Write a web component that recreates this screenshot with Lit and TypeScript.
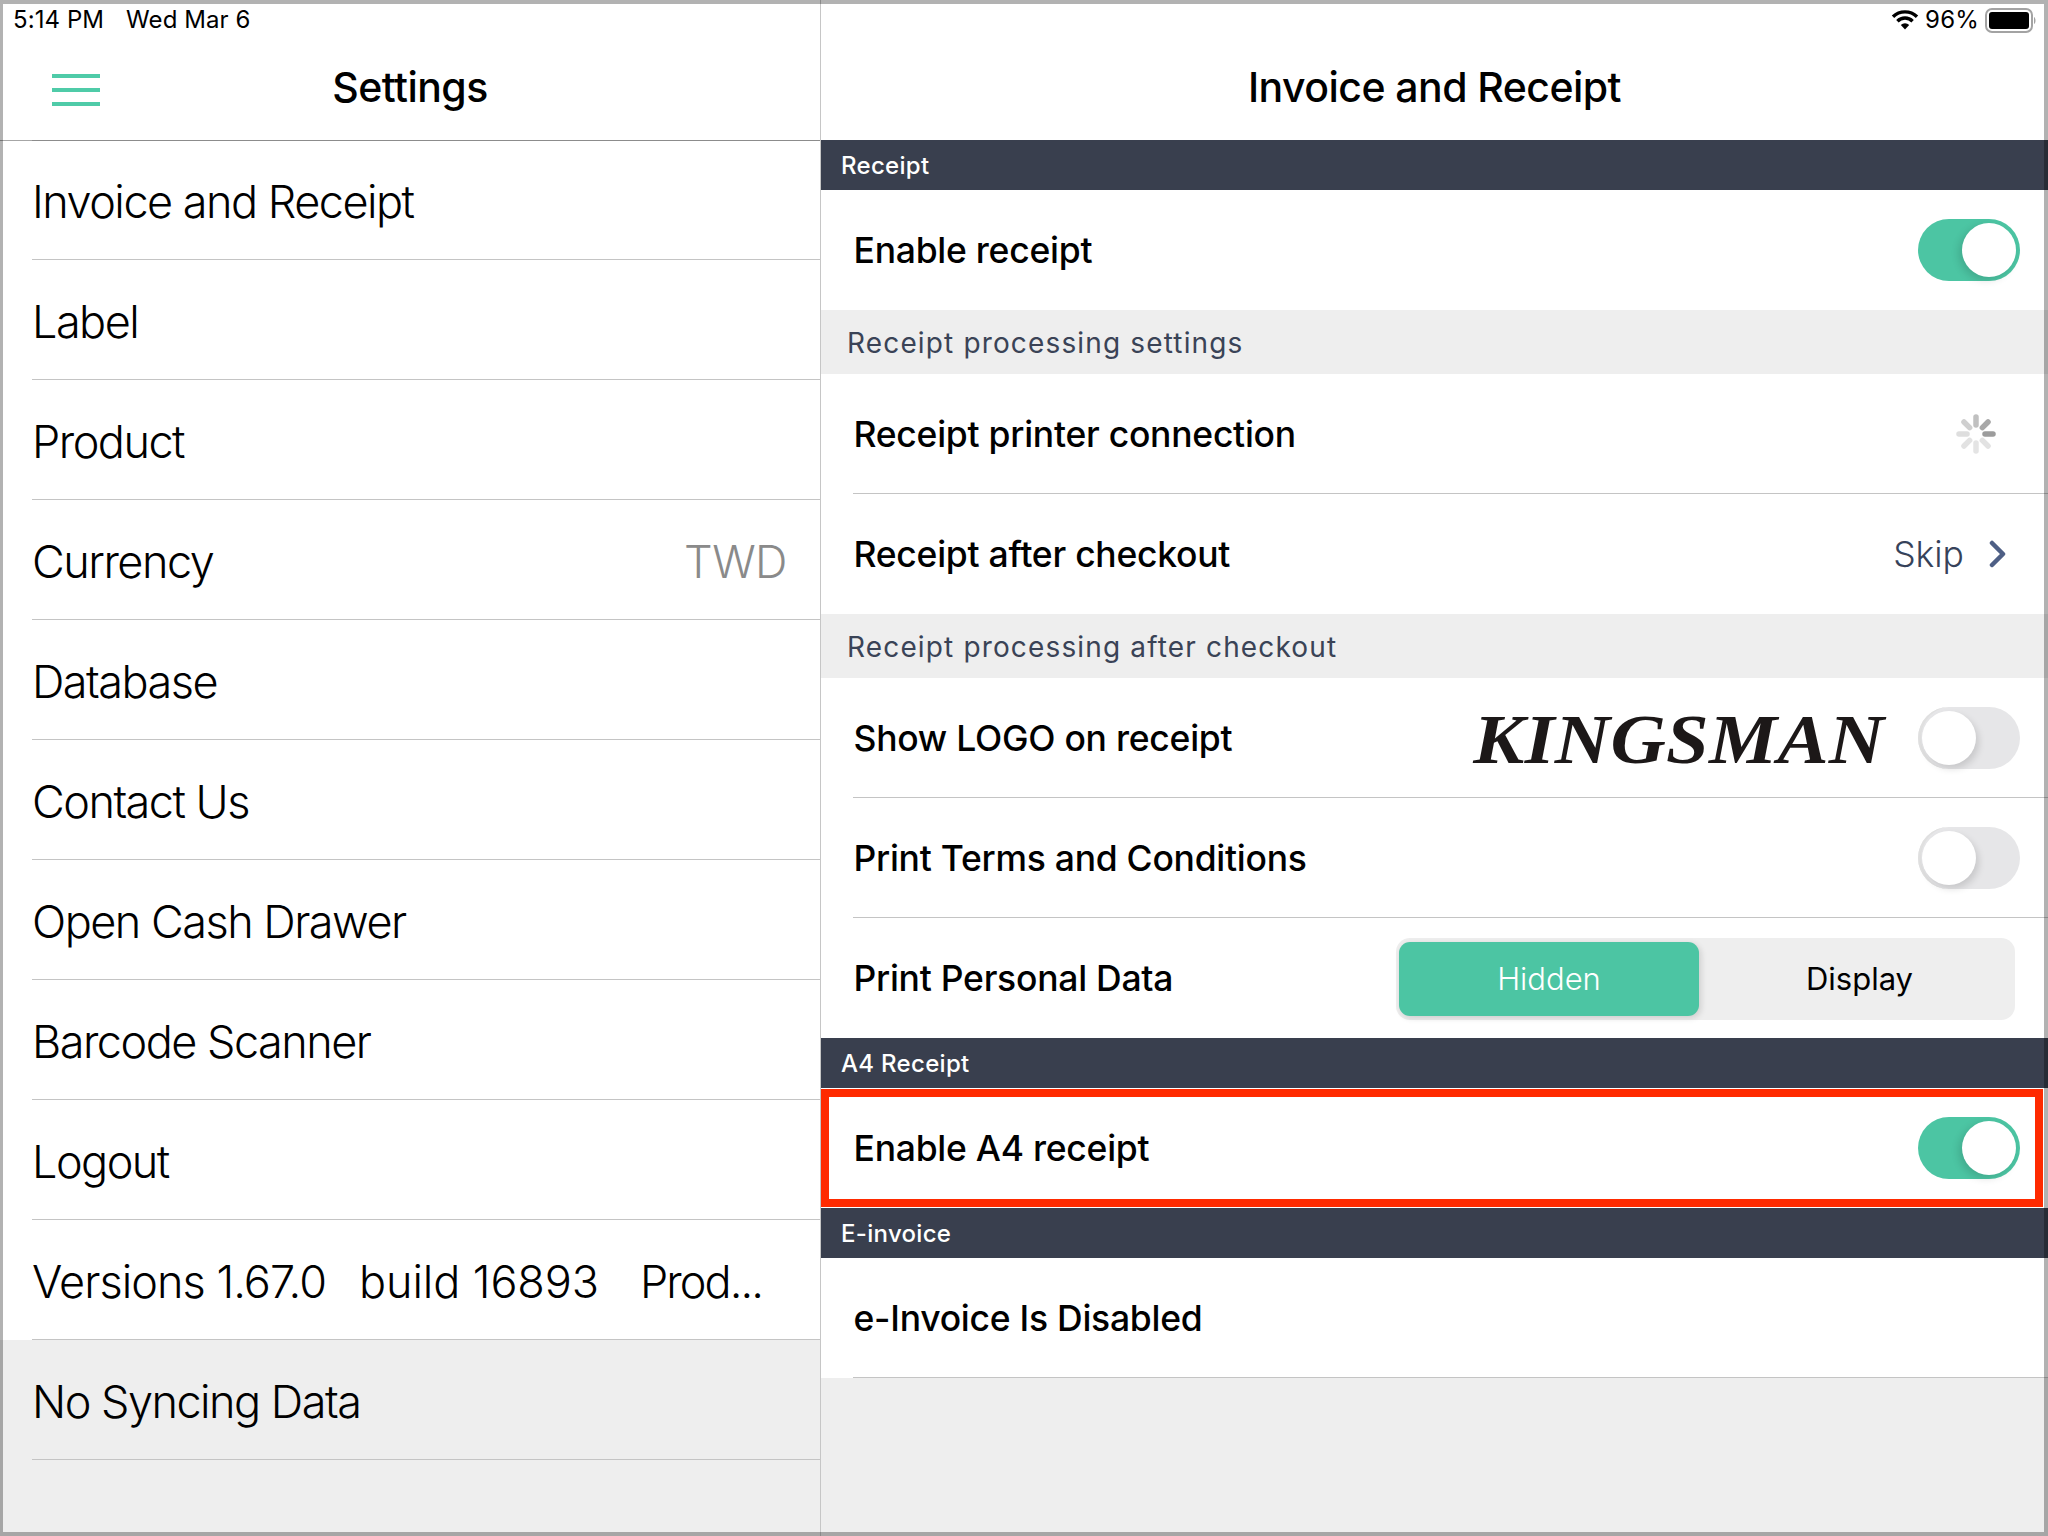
import { LitElement, html, css, svg } from "lit";
import { customElement } from "lit/decorators.js";

const LEFT = [
  ["Invoice and Receipt", ""],
  ["Label", ""],
  ["Product", ""],
  ["Currency", "TWD"],
  ["Database", ""],
  ["Contact Us", ""],
  ["Open Cash Drawer", ""],
  ["Barcode Scanner", ""],
  ["Logout", ""],
];

const SPOKES = [
  [90, "#9c9c9c"], [45, "#a8a8a8"], [0, "#c0c0c0"], [-45, "#cfcfcf"],
  [-90, "#dedede"], [-135, "#e2e2e2"], [180, "#e4e4e4"], [135, "#e2e2e2"],
];

@customElement("app-root")
export class AppRoot extends LitElement {
  static styles = css`
    :host {
      display: block;
      position: relative;
      width: 2048px;
      height: 1536px;
      overflow: hidden;
      background: #eeeeee;
      font-family: Inter, "Liberation Sans", sans-serif;
      color: #000;
    }
    .frame {
      position: absolute;
      inset: 0;
      border: solid rgba(0, 0, 0, 0.3);
      border-width: 4px 4px 4px 3px;
      pointer-events: none;
    }
    .app { display: flex; height: 100%; }
    .left {
      box-sizing: border-box;
      width: 821px;
      flex: none;
      border-right: 1px solid #c6c6c6;
      display: flex;
      flex-direction: column;
    }
    .right { flex: 1; min-width: 0; display: flex; flex-direction: column; }
    .top { background: #fff; height: 140px; display: flex; flex-direction: column; flex: none; }
    .status {
      height: 40px;
      flex: none;
      box-sizing: border-box;
      padding-top: 7px;
      font-size: 24px;
      line-height: 26px;
      display: flex;
      align-items: flex-start;
    }
    .status.l { padding-left: 13px; gap: 22px; letter-spacing: 0.08px; }
    .status.r { justify-content: flex-end; padding-right: 11px; gap: 6px; letter-spacing: 0.2px; }
    .nav {
      flex: 1;
      position: relative;
      display: flex;
      align-items: center;
      justify-content: center;
      font-size: 41px;
      font-weight: 500;
      letter-spacing: -0.55px;
      padding-bottom: 6px;
    }
    .burger {
      position: absolute;
      left: 52px;
      top: 34px;
      width: 48px;
      height: 32px;
      display: flex;
      flex-direction: column;
      justify-content: space-between;
    }
    .burger i { display: block; height: 4px; background: #4fcba8; }
    .rule {
      height: 1px;
      margin-bottom: -1px;
      position: relative;
      background: linear-gradient(to right, #a6a6a6 32px, #8c8c8c 32px);
      flex: none;
    }
    .list { background: #fff; flex: none; }
    .item { padding-left: 32px; height: 120px; }
    .item > div {
      height: 100%;
      box-sizing: border-box;
      border-bottom: 1px solid #c4c4c4;
      padding: 4px 33px 0 0;
      display: flex;
      align-items: center;
      justify-content: space-between;
      font-size: 45px;
      font-weight: 350;
      letter-spacing: -1.5px;
      white-space: pre;
    }
    .item .val { color: #8a8a8a; letter-spacing: -0.5px; font-weight: 300; }
    .item.grey { background: #eeeeee; }
    .versions { display: flex; justify-content: flex-start !important; }
    .v1 { letter-spacing: -0.95px; margin-right: 33px; }
    .v2 { letter-spacing: -0.1px; margin-right: 41px; }
    .v3 { letter-spacing: -1.9px; }
    .dark {
      height: 50px;
      flex: none;
      background: #393f4e;
      color: #fff;
      font-size: 24px;
      font-weight: 500;
      display: flex;
      align-items: center;
      padding-left: 20px;
      letter-spacing: 0.3px;
    }
    .sub {
      height: 64px;
      flex: none;
      box-sizing: border-box;
      background: #eeeeee;
      color: #3a4356;
      font-size: 28px;
      display: flex;
      align-items: center;
      padding: 2px 0 0 26px;
      letter-spacing: 1.15px;
    }
    .row {
      height: 120px;
      flex: none;
      box-sizing: border-box;
      background: #fff;
      padding-left: 32px;
    }
    .row > div {
      height: 100%;
      box-sizing: border-box;
      display: flex;
      align-items: center;
      justify-content: space-between;
    }
    .row.line > div { border-bottom: 1px solid #c4c4c4; }
    .label { font-size: 35.5px; font-weight: 500; letter-spacing: -0.26px; margin-left: 0.5px; }
    .row.line .label { padding-top: 2px; }
    .pr28 { padding-right: 28px; }
    .pr52 { padding-right: 52px; }
    .pr42 { padding-right: 42px; }
    .pr33 { padding-right: 33px; }
    .toggle {
      width: 102px;
      height: 62px;
      border-radius: 31px;
      box-sizing: border-box;
      padding: 4px;
      display: flex;
      flex: none;
    }
    .toggle i {
      display: block;
      width: 54px;
      height: 54px;
      border-radius: 50%;
      background: #fff;
    }
    .toggle.on { background: #4cc5a3; justify-content: flex-end; }
    .toggle.on i { box-shadow: -3px 3px 8px rgba(0, 0, 0, 0.14); }
    .toggle.off { background: #e6e6e8; box-shadow: inset 4px 0 0 -1px #e0e0e0; }
    .toggle.off i { box-shadow: 3px 4px 7px rgba(0, 0, 0, 0.13); }
    .side { display: flex; align-items: center; }
    .logo {
      display: inline-block;
      font-family: "Liberation Serif", serif;
      font-style: italic;
      font-weight: 700;
      font-size: 69px;
      line-height: 1;
      color: #1c1818;
      margin: 5px 33px 0 0;
      letter-spacing: 0.3px;
      transform: scaleX(1.11);
      transform-origin: right center;
    }
    .skip { display: flex; align-items: center; gap: 25px; color: #36425a; font-size: 35.5px; font-weight: 300; }
    .seg {
      width: 619px;
      height: 82px;
      margin-top: 2px;
      border-radius: 14px;
      background: #eeeeee;
      box-sizing: border-box;
      padding: 4px 0 4px 3px;
      display: flex;
      font-size: 31px;
    }
    .seg span { display: flex; align-items: center; justify-content: center; padding-bottom: 2px; }
    .seg .a {
      width: 300px;
      border-radius: 11px;
      background: #4cc5a3;
      color: #fff;
      font-weight: 300;
      box-shadow: 2px 2px 6px rgba(0, 0, 0, 0.14);
    }
    .seg .b { flex: 1; padding-left: 5px; }
    .hl {
      height: 120px;
      flex: none;
      box-sizing: border-box;
      background: #fff;
      padding: 1px 5px 1px 0;
    }
    .hl > div {
      height: 100%;
      box-sizing: border-box;
      border: 8px solid #ff2a00;
      display: flex;
      align-items: center;
      justify-content: space-between;
      padding: 0 15px 0 24px;
    }
    .fill { flex: 1; }
  `;

  private toggle(on: boolean) {
    return html`<div class="toggle ${on ? "on" : "off"}"><i></i></div>`;
  }

  private spinner() {
    return html`<svg width="40" height="40" viewBox="-20 -20 40 40">
      ${SPOKES.map(
        ([a, c]) => svg`<line x1="0" y1="-9" x2="0" y2="-17" stroke=${c} stroke-width="5.5" stroke-linecap="round" transform="rotate(${a})"></line>`
      )}
    </svg>`;
  }

  render() {
    return html`
      <div class="app">
        <section class="left">
          <div class="top">
            <div class="status l"><span>5:14 PM</span><span>Wed Mar 6</span></div>
            <div class="nav">
              <div class="burger"><i></i><i></i><i></i></div>
              Settings
            </div>
          </div>
          <div class="rule"></div>
          <div class="list">
            ${LEFT.map(
              ([t, v]) => html`<div class="item"><div><span>${t}</span>${v ? html`<span class="val">${v}</span>` : ""}</div></div>`
            )}
            <div class="item"><div class="versions"><span class="v1">Versions 1.67.0</span><span class="v2">build 16893</span><span class="v3">Prod...</span></div></div>
          </div>
          <div class="item grey"><div><span>No Syncing Data</span></div></div>
          <div class="fill"></div>
        </section>
        <section class="right">
          <div class="top">
            <div class="status r">
              <svg width="28" height="20" viewBox="0 0 28 20" style="margin-top:3px">
                <path d="M14 19.5 L9.8 15 A6 6 0 0 1 18.2 15 Z" fill="#000"></path>
                <path d="M6.4 11.2 A10.8 10.8 0 0 1 21.6 11.2" fill="none" stroke="#000" stroke-width="3.4"></path>
                <path d="M2 6.8 A17 17 0 0 1 26 6.8" fill="none" stroke="#000" stroke-width="3.4"></path>
              </svg>
              <span>96%</span>
              <svg width="52" height="26" viewBox="0 0 52 26" style="margin-top:1px">
                <rect x="1" y="1" width="46" height="23" rx="6" fill="#fff" stroke="#a3a3a3" stroke-width="2"></rect>
                <rect x="4" y="4" width="40" height="17" rx="3" fill="#000"></rect>
                <path d="M49 9 C51 10 51 15 49 16 Z" fill="#a3a3a3"></path>
              </svg>
            </div>
            <div class="nav">Invoice and Receipt</div>
          </div>
          <div class="dark">Receipt</div>
          <div class="row"><div class="pr28"><span class="label">Enable receipt</span>${this.toggle(true)}</div></div>
          <div class="sub">Receipt processing settings</div>
          <div class="row line"><div class="pr52"><span class="label">Receipt printer connection</span>${this.spinner()}</div></div>
          <div class="row"><div class="pr42">
            <span class="label">Receipt after checkout</span>
            <span class="skip">Skip
              <svg width="17" height="28" viewBox="0 0 17 28"><path d="M3 3 L14 14 L3 25" fill="none" stroke="#4e5f85" stroke-width="4.5" stroke-linecap="round" stroke-linejoin="round"></path></svg>
            </span>
          </div></div>
          <div class="sub">Receipt processing after checkout</div>
          <div class="row line"><div class="pr28">
            <span class="label">Show LOGO on receipt</span>
            <span class="side"><span class="logo">KINGSMAN</span>${this.toggle(false)}</span>
          </div></div>
          <div class="row line"><div class="pr28"><span class="label">Print Terms and Conditions</span>${this.toggle(false)}</div></div>
          <div class="row"><div class="pr33">
            <span class="label">Print Personal Data</span>
            <div class="seg"><span class="a">Hidden</span><span class="b">Display</span></div>
          </div></div>
          <div class="dark">A4 Receipt</div>
          <div class="hl"><div><span class="label">Enable A4 receipt</span>${this.toggle(true)}</div></div>
          <div class="dark">E-invoice</div>
          <div class="row line"><div><span class="label">e-Invoice Is Disabled</span></div></div>
          <div class="fill"></div>
        </section>
      </div>
      <div class="frame"></div>
    `;
  }
}
